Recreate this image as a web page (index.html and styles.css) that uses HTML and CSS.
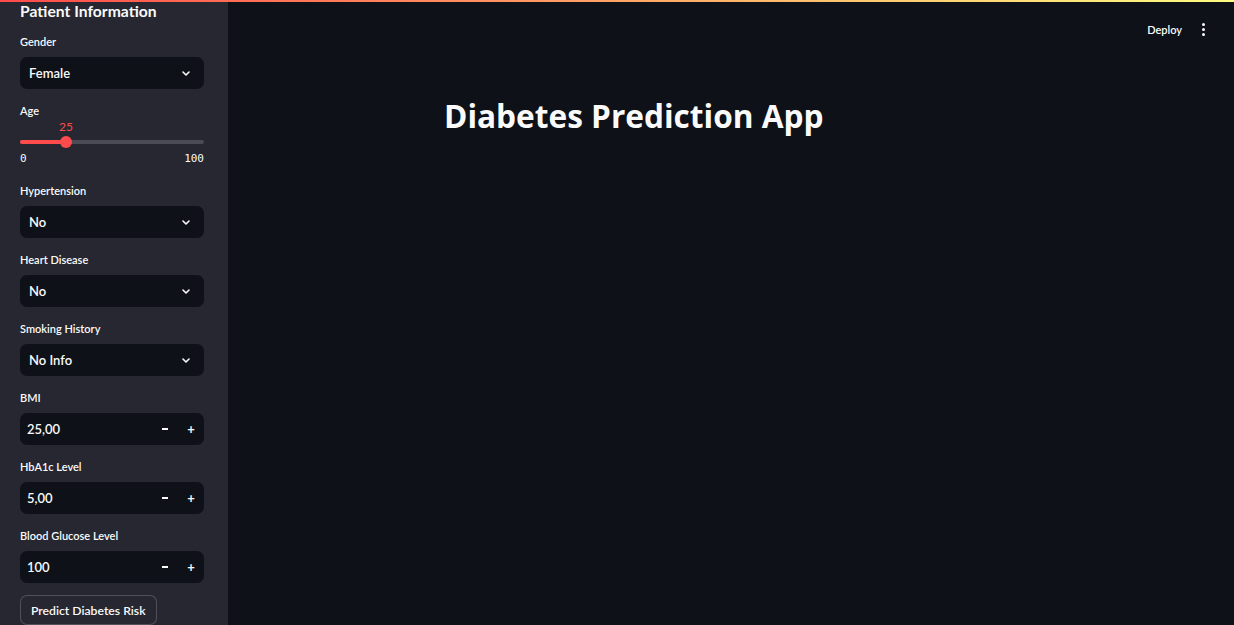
FILE: index.html
```html
<!DOCTYPE html>
<html lang="en">
<head>
<meta charset="utf-8">
<title>Diabetes Prediction App</title>
<link rel="stylesheet" href="styles.css">
</head>
<body>
<div class="decoration"></div>
<aside class="sidebar">
  <h2 class="side-title">Patient Information</h2>

  <div class="widget">
    <div class="label">Gender</div>
    <div class="select"><span>Female</span><svg class="chev" viewBox="0 0 8 5" width="8" height="5"><path d="M1 1l3 3 3-3" fill="none" stroke="#fafafa" stroke-width="1.6" stroke-linecap="round" stroke-linejoin="round"/></svg></div>
  </div>

  <div class="widget slider-widget">
    <div class="label">Age</div>
    <div class="slider">
      <div class="slider-value-row"><span class="slider-value" style="left:25%">25</span></div>
      <div class="track"><div class="fill" style="width:25%"></div><div class="thumb" style="left:25%"></div></div>
      <div class="minmax"><span>0</span><span>100</span></div>
    </div>
  </div>

  <div class="widget">
    <div class="label">Hypertension</div>
    <div class="select"><span>No</span><svg class="chev" viewBox="0 0 8 5" width="8" height="5"><path d="M1 1l3 3 3-3" fill="none" stroke="#fafafa" stroke-width="1.6" stroke-linecap="round" stroke-linejoin="round"/></svg></div>
  </div>

  <div class="widget">
    <div class="label">Heart Disease</div>
    <div class="select"><span>No</span><svg class="chev" viewBox="0 0 8 5" width="8" height="5"><path d="M1 1l3 3 3-3" fill="none" stroke="#fafafa" stroke-width="1.6" stroke-linecap="round" stroke-linejoin="round"/></svg></div>
  </div>

  <div class="widget">
    <div class="label">Smoking History</div>
    <div class="select"><span>No Info</span><svg class="chev" viewBox="0 0 8 5" width="8" height="5"><path d="M1 1l3 3 3-3" fill="none" stroke="#fafafa" stroke-width="1.6" stroke-linecap="round" stroke-linejoin="round"/></svg></div>
  </div>

  <div class="widget">
    <div class="label">BMI</div>
    <div class="number"><span class="num-val">25,00</span><span class="step"><i class="minus"></i></span><span class="step">+</span></div>
  </div>

  <div class="widget">
    <div class="label">HbA1c Level</div>
    <div class="number"><span class="num-val">5,00</span><span class="step"><i class="minus"></i></span><span class="step">+</span></div>
  </div>

  <div class="widget">
    <div class="label">Blood Glucose Level</div>
    <div class="number"><span class="num-val">100</span><span class="step"><i class="minus"></i></span><span class="step">+</span></div>
  </div>

  <button class="btn">Predict Diabetes Risk</button>
</aside>

<main class="main">
  <header class="topbar">
    <span class="deploy">Deploy</span>
    <span class="kebab"><i></i><i></i><i></i></span>
  </header>
  <section class="content">
    <h1 class="title">Diabetes Prediction App</h1>
  </section>
</main>
</body>
</html>
```

FILE: styles.css
```css
* { box-sizing: border-box; }
html, body { margin: 0; padding: 0; }
body {
  width: 1234px;
  height: 625px;
  overflow: hidden;
  display: flex;
  background: #0e1117;
  color: #fafafa;
  font-family: Lato, "Noto Sans", sans-serif;
  position: relative;
}
.decoration {
  position: absolute;
  top: 0; left: 0; right: 0;
  height: 2px;
  background: linear-gradient(90deg, #ff4b4b, #fffd80);
  z-index: 5;
}
.sidebar {
  width: 228px;
  flex: none;
  background: #262730;
  padding: 0 24px 0 20px;
  display: flex;
  flex-direction: column;
}
.side-title {
  margin: 0 0 12px;
  font-size: 15.7px;
  line-height: 22px;
  font-weight: 700;
  color: #fafafa;
}
.widget { margin-bottom: 14px; }
.label {
  font-size: 11px;
  line-height: 16px;
  height: 16px;
  margin-bottom: 7px;
  font-weight: 600;
  color: #fafafa;
}
.select, .number {
  height: 32px;
  background: #0e1117;
  border-radius: 7px;
  display: flex;
  align-items: center;
  font-size: 13px;
  font-weight: 600;
}
.select { padding: 0 14px 0 9px; justify-content: space-between; }
.chev { display: block; }
.number { padding: 0 0 0 7px; }
.num-val { flex: 1; }
.step {
  width: 26px;
  display: flex;
  justify-content: center;
  align-items: center;
  font-weight: 700;
  font-size: 13px;
}
.minus { display: block; width: 6px; height: 2px; background: #fafafa; }
.slider-widget { margin-bottom: 0; }
.slider-widget .label { margin-bottom: 0; }
.slider { padding-bottom: 16px; }
.slider-value-row { position: relative; height: 16px; }
.slider-value {
  position: absolute;
  top: 0;
  transform: translateX(-50%);
  font-size: 12px;
  line-height: 16px;
  color: #ff4b4b;
}
.track {
  position: relative;
  height: 4px;
  margin: 5px 0 7px;
  background: #4a4b54;
  border-radius: 2px;
}
.fill { height: 4px; background: #ff4b4b; border-radius: 2px; }
.thumb {
  position: absolute;
  top: -4px;
  width: 12px; height: 12px;
  margin-left: -6px;
  border-radius: 50%;
  background: #ff4b4b;
}
.minmax {
  display: flex;
  justify-content: space-between;
  font-family: "DejaVu Sans Mono", "Liberation Mono", monospace;
  font-size: 11px;
  line-height: 16px;
  color: #fafafa;
}
.btn {
  align-self: flex-start;
  margin-top: -2px;
  height: 38px;
  padding: 0 10px;
  background: #262730;
  color: #fafafa;
  border: 1px solid rgba(250,250,250,0.2);
  border-radius: 7px;
  font-family: Lato, "Noto Sans", sans-serif;
  font-size: 12.2px;
  font-weight: 600;
}
.main { flex: 1; display: flex; flex-direction: column; }
.topbar {
  height: 58px;
  display: flex;
  justify-content: flex-end;
  align-items: center;
  padding-right: 29px;
  gap: 20px;
}
.deploy { font-size: 11px; font-weight: 600; }
.kebab { display: flex; flex-direction: column; gap: 2px; }
.kebab i { display: block; width: 3px; height: 3px; border-radius: 50%; background: #fafafa; }
.content { padding: 38px 0 0 216px; }
.title {
  margin: 0;
  font-family: "Open Sans", Lato, sans-serif;
  font-size: 31.6px;
  line-height: 40px;
  font-weight: 700;
}
```
